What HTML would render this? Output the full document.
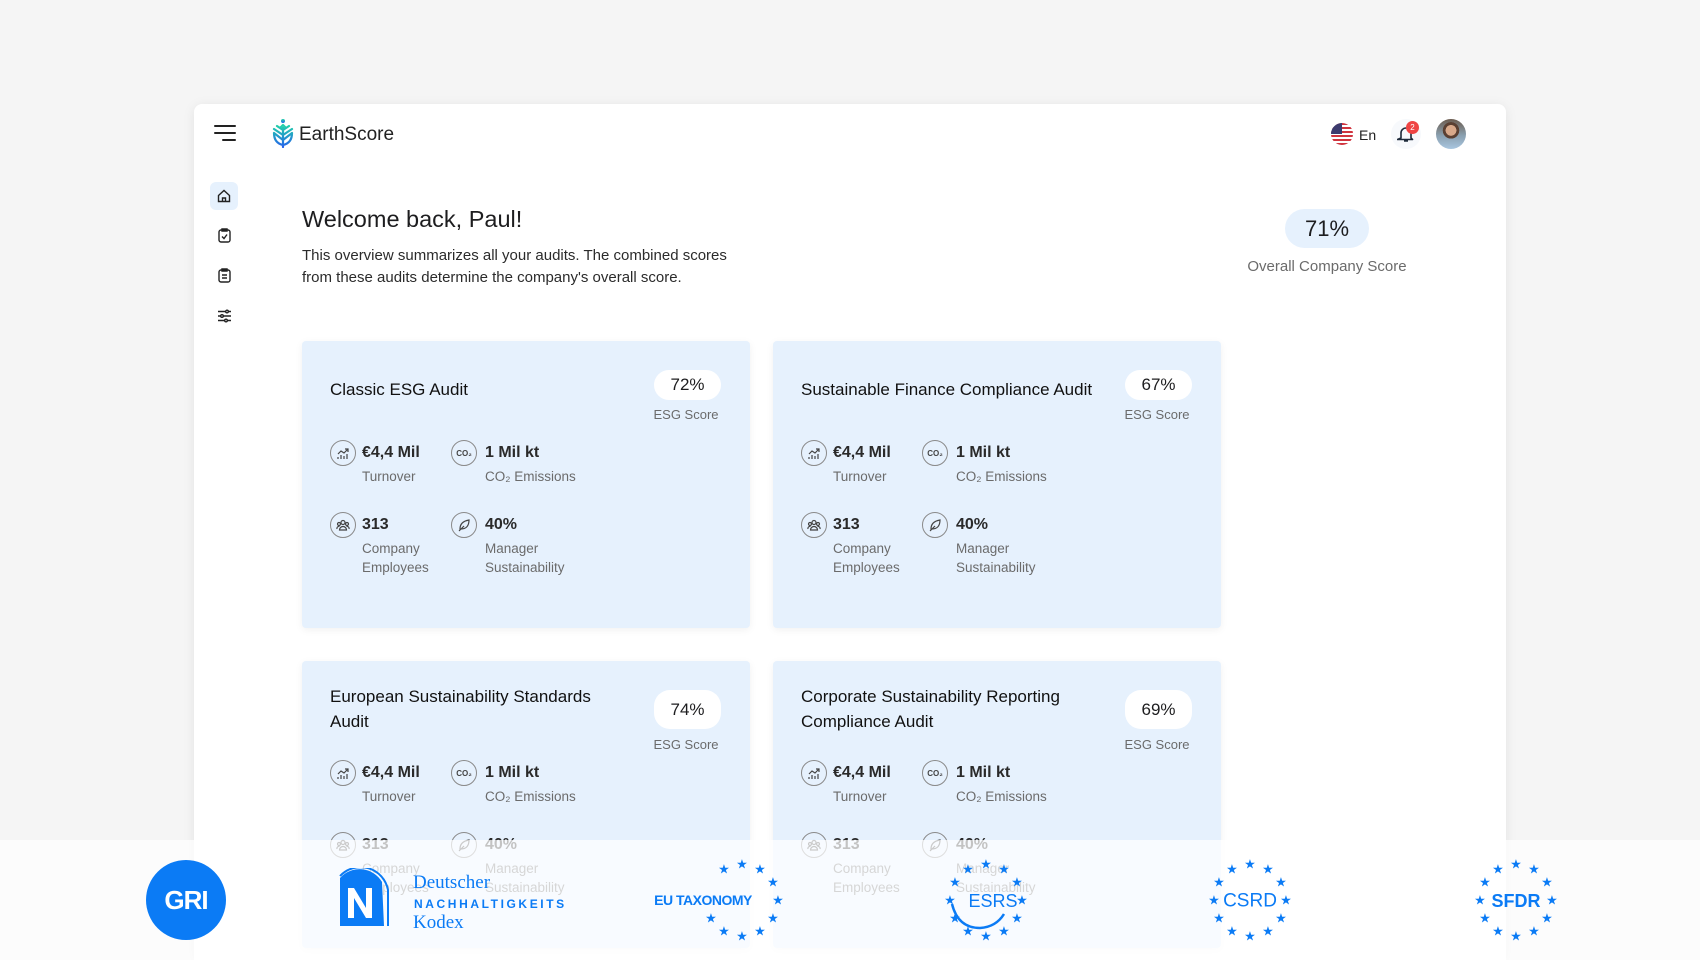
<!DOCTYPE html>
<html><head><meta charset="utf-8"><style>
*{box-sizing:border-box;margin:0;padding:0}
html{width:1700px;height:960px;overflow:hidden}
body{width:1700px;height:960px;background:#f5f5f5;font-family:"Liberation Sans",sans-serif;position:relative;overflow:hidden;color:#1d1d1f}
.panel{position:absolute;left:194px;top:104px;width:1312px;height:856px;background:#fff;border-radius:8px 8px 0 0;box-shadow:0 2px 12px rgba(0,0,0,.08)}
.abs{position:absolute}
.card{position:absolute;width:448px;height:287px;background:#e6f1fd;border-radius:4px;box-shadow:0 2px 8px rgba(0,0,0,.06)}
.card .t{position:absolute;left:28px;font-size:17px;line-height:25px;color:#111}
.pill{position:absolute;left:352px;width:67px;background:#fff;border-radius:16px;text-align:center;font-size:17px;color:#1d1d1f}
.esg{position:absolute;left:340px;width:88px;text-align:center;font-size:13px;color:#6b6b6b}
.ic{position:absolute;width:26px;height:26px;border:1px solid #8a8a8a;border-radius:50%;display:flex;align-items:center;justify-content:center}
.v{position:absolute;font-size:16px;font-weight:bold;color:#2a2a2a;line-height:20px;transform:translateY(-10px)}
.l{position:absolute;font-size:13.5px;color:#6b6b6b;line-height:19px}
.overlay{position:absolute;left:0;top:840px;width:1700px;height:120px;background:rgba(255,255,255,.72)}
.blue{color:#0b7bf5;fill:#0b7bf5}
</style></head><body>
<div class="panel"></div>
<svg class="abs" style="left:214px;top:124px" width="22" height="18" viewBox="0 0 22 18"><path d="M1 2h20M1 9h20M9 16h12" stroke="#222" stroke-width="2" stroke-linecap="round"/></svg>
<svg class="abs" style="left:271px;top:118px" width="24" height="30" viewBox="0 0 24 30"><defs><linearGradient id="g" x1="0" y1="0" x2="0" y2="1"><stop offset="0" stop-color="#22d3a8"/><stop offset="1" stop-color="#2563eb"/></linearGradient></defs><circle cx="12" cy="3" r="2" fill="url(#g)"/><path d="M12 7 L9 10 M12 7 L15 10 M12 12 L6 8 M12 12 L18 8 M12 17 L3 11 M12 17 L21 11 M12 22 L3 15 M12 22 L21 15 M12 10 V29 M3 15 Q3 25 12 27 Q21 25 21 15" stroke="url(#g)" stroke-width="2.2" fill="none" stroke-linecap="round"/></svg>
<div class="abs" style="left:299px;top:124px;font-size:19px;color:#222">EarthScore</div>
<svg class="abs" style="left:1331px;top:123px" width="22" height="22" viewBox="0 0 22 22"><defs><clipPath id="c"><circle cx="11" cy="11" r="11"/></clipPath></defs><g clip-path="url(#c)"><rect width="22" height="22" fill="#fff"/><g fill="#d0343e"><rect y="0" width="22" height="2"/><rect y="4" width="22" height="2"/><rect y="8" width="22" height="2"/><rect y="12" width="22" height="2"/><rect y="16" width="22" height="2"/><rect y="20" width="22" height="2"/></g><rect width="11" height="11" fill="#3c3b6e"/></g></svg>
<div class="abs" style="left:1359px;top:127px;font-size:14px;color:#222">En</div>
<div class="abs" style="left:1391px;top:119px;width:30px;height:30px;border-radius:50%;background:#f7f9fc"></div>
<svg class="abs" style="left:1397px;top:125px" width="18" height="18" viewBox="0 0 18 18"><path d="M4 13V8a5 5 0 0 1 10 0v5l1.5 1.5h-15zM7 16h4" stroke="#1e2a3a" stroke-width="1.6" fill="none" stroke-linejoin="round"/></svg>
<div class="abs" style="left:1406px;top:121px;width:13px;height:13px;border-radius:50%;background:#ef4444;color:#fff;font-size:8px;text-align:center;line-height:13px">2</div>
<div class="abs" style="left:1436px;top:119px;width:30px;height:30px;border-radius:50%;background:radial-gradient(circle at 50% 38%,#d9a98a 0 22%,#5b4032 23% 34%,transparent 35%),linear-gradient(180deg,#6b5b4e 0,#8aa0b0 55%,#a9c6e0 100%)"></div>
<div class="abs" style="left:210px;top:182px;width:28px;height:28px;border-radius:6px;background:#e6f1fd"></div>
<svg class="abs" style="left:217px;top:189px" width="14" height="14" viewBox="0 0 14 14" fill="none" stroke="#222" stroke-width="1.4"><path d="M1.5 6.5L7 1.5l5.5 5V12.5h-11z"/><path d="M5.5 12.5V9h3v3.5"/></svg>
<svg class="abs" style="left:218px;top:228px" width="13" height="15" viewBox="0 0 13 15" fill="none" stroke="#222" stroke-width="1.4"><rect x="1" y="2" width="11" height="12" rx="2"/><path d="M4 1h5v2H4zM4 8.5l2 2 3-4"/></svg>
<svg class="abs" style="left:218px;top:268px" width="13" height="15" viewBox="0 0 13 15" fill="none" stroke="#222" stroke-width="1.4"><rect x="1" y="2" width="11" height="12" rx="2"/><path d="M4 1h5v2H4zM4 7h5M4 10h5"/></svg>
<svg class="abs" style="left:217px;top:309px" width="15" height="14" viewBox="0 0 15 14" fill="none" stroke="#222" stroke-width="1.4"><path d="M1 2.5h13M1 7h13M1 11.5h13"/><circle cx="10" cy="2.5" r="1.3" fill="#fff"/><circle cx="5" cy="7" r="1.3" fill="#fff"/><circle cx="9" cy="11.5" r="1.3" fill="#fff"/></svg>
<div class="abs" style="left:302px;top:206px;font-size:23.5px;color:#1d1d1f">Welcome back, Paul!</div>
<div class="abs" style="left:302px;top:245px;font-size:15px;line-height:21.5px;color:#2b2b2b;width:450px">This overview summarizes all your audits. The combined scores from these audits determine the company's overall score.</div>
<div class="abs" style="left:1285px;top:209px;width:84px;height:39px;border-radius:20px;background:#e6f1fd;text-align:center;line-height:39px;font-size:22px;color:#1d1d1f">71%</div>
<div class="abs" style="left:1227px;top:258px;width:200px;text-align:center;font-size:15px;color:#6b6b6b">Overall Company Score</div>

<div class="card" style="left:302px;top:341px">
 <div class="t" style="top:36px">Classic ESG Audit</div>
 <div class="pill" style="top:29px;height:30px;line-height:30px">72%</div>
 <div class="esg" style="top:66px">ESG Score</div>
 STATS
</div>
<div class="card" style="left:773px;top:341px">
 <div class="t" style="top:36px">Sustainable Finance Compliance Audit</div>
 <div class="pill" style="top:29px;height:30px;line-height:30px">67%</div>
 <div class="esg" style="top:66px">ESG Score</div>
 STATS
</div>
<div class="card" style="left:302px;top:661px">
 <div class="t" style="top:23px">European Sustainability Standards<br>Audit</div>
 <div class="pill" style="top:29px;height:39px;line-height:39px">74%</div>
 <div class="esg" style="top:76px">ESG Score</div>
 STATS
</div>
<div class="card" style="left:773px;top:661px">
 <div class="t" style="top:23px">Corporate Sustainability Reporting<br>Compliance Audit</div>
 <div class="pill" style="top:29px;height:39px;line-height:39px">69%</div>
 <div class="esg" style="top:76px">ESG Score</div>
 STATS
</div>

<div class="overlay"></div>
<div class="abs" style="left:146px;top:860px;width:80px;height:80px;border-radius:50%;background:#0b7bf5;color:#fff;font-weight:bold;font-size:26px;text-align:center;line-height:80px;letter-spacing:-1px">GRI</div>
<svg class="abs" style="left:336px;top:868px" width="60" height="62" viewBox="0 0 60 62"><path d="M4 8 A28 28 0 0 1 52 22 L52 58" fill="none" stroke="#0b7bf5" stroke-width="2"/><path d="M4 10 A26 26 0 0 1 46 14 L48 58 L4 58Z" fill="#0b7bf5"/><path d="M12 50V20h6l12 20V20h6v30h-6L18 30v20z" fill="#fff"/></svg>
<div class="abs blue" style="left:413px;top:874px;font-family:'Liberation Serif',serif;font-size:19px;line-height:18px">Deutscher</div>
<div class="abs blue" style="left:414px;top:897px;font-size:12px;font-weight:bold;letter-spacing:2.6px">NACHHALTIGKEITS</div>
<div class="abs blue" style="left:413px;top:912px;font-family:'Liberation Serif',serif;font-size:19px">Kodex</div>
<svg class="abs" style="left:640px;top:850px" width="1000" height="100" viewBox="640 850 1000 100">
<g font-family="Liberation Sans,sans-serif" fill="#0b7bf5" font-size="13" text-anchor="middle" dominant-baseline="central">
<g transform="translate(742,900)"><text x="-18" y="-31">★</text><text x="0" y="-36">★</text><text x="18" y="-31">★</text><text x="31" y="-18">★</text><text x="36" y="0">★</text><text x="31" y="18">★</text><text x="18" y="31">★</text><text x="0" y="36">★</text><text x="-18" y="31">★</text><text x="-31" y="18">★</text></g>
<text x="703" y="900" font-size="14" font-weight="bold" style="letter-spacing:-.5px">EU TAXONOMY</text>
<g transform="translate(986,900)"><text x="-18" y="-31">★</text><text x="0" y="-36">★</text><text x="18" y="-31">★</text><text x="31" y="-18">★</text><text x="36" y="0">★</text><text x="31" y="18">★</text><text x="18" y="31">★</text><text x="0" y="36">★</text><text x="-18" y="31">★</text><text x="-31" y="18">★</text><text x="-36" y="0">★</text><text x="-31" y="-18">★</text><text x="7" y="1" font-size="18">ESRS</text></g>
<path d="M952 904 Q958 928 980 928 Q996 927 1004 914" fill="none" stroke="#0b7bf5" stroke-width="2.5"/>
<g transform="translate(1250,900)"><text x="-18" y="-31">★</text><text x="0" y="-36">★</text><text x="18" y="-31">★</text><text x="31" y="-18">★</text><text x="36" y="0">★</text><text x="31" y="18">★</text><text x="18" y="31">★</text><text x="0" y="36">★</text><text x="-18" y="31">★</text><text x="-31" y="18">★</text><text x="-36" y="0">★</text><text x="-31" y="-18">★</text><text x="0" y="1" font-size="19">CSRD</text></g>
<g transform="translate(1516,900)"><text x="-18" y="-31">★</text><text x="0" y="-36">★</text><text x="18" y="-31">★</text><text x="31" y="-18">★</text><text x="36" y="0">★</text><text x="31" y="18">★</text><text x="18" y="31">★</text><text x="0" y="36">★</text><text x="-18" y="31">★</text><text x="-31" y="18">★</text><text x="-36" y="0">★</text><text x="-31" y="-18">★</text><text x="0" y="1" font-size="18" font-weight="bold">SFDR</text></g>
</g></svg>
<script>
const S=`<div class="ic" style="left:28px;top:99px"><svg width="14" height="14" viewBox="0 0 14 14" fill="none" stroke="#444" stroke-width="1.2"><path d="M2 8l3-3 3 2 4-4M9 3h3v3M2 13v-2M5 13v-4M8 13v-3M11 13V8"/></svg></div>
<div class="v" style="left:60px;top:112px">€4,4 Mil</div><div class="l" style="left:60px;top:126px">Turnover</div>
<div class="ic" style="left:149px;top:99px"><span style="font-size:8px;color:#444;font-weight:bold">CO₂</span></div>
<div class="v" style="left:183px;top:112px">1 Mil kt</div><div class="l" style="left:183px;top:126px">CO₂ Emissions</div>
<div class="ic" style="left:28px;top:171px"><svg width="14" height="14" viewBox="0 0 14 14" fill="none" stroke="#444" stroke-width="1.2"><circle cx="7" cy="4.5" r="2"/><circle cx="3" cy="6" r="1.5"/><circle cx="11" cy="6" r="1.5"/><path d="M3.5 12a3.5 3.5 0 0 1 7 0zM1 11a2 2 0 0 1 2.5-2.5M13 11a2 2 0 0 0-2.5-2.5"/></svg></div>
<div class="v" style="left:60px;top:184px">313</div><div class="l" style="left:60px;top:198px">Company<br>Employees</div>
<div class="ic" style="left:149px;top:171px"><svg width="14" height="14" viewBox="0 0 14 14" fill="none" stroke="#444" stroke-width="1.2"><path d="M3 11C3 6 6 3 12 2c0 6-3 9-8 9zM2 13l5-5"/></svg></div>
<div class="v" style="left:183px;top:184px">40%</div><div class="l" style="left:183px;top:198px">Manager<br>Sustainability</div>`;
document.querySelectorAll('.card').forEach(c=>{c.innerHTML=c.innerHTML.replace('STATS',S)});
</script>
</body></html>
